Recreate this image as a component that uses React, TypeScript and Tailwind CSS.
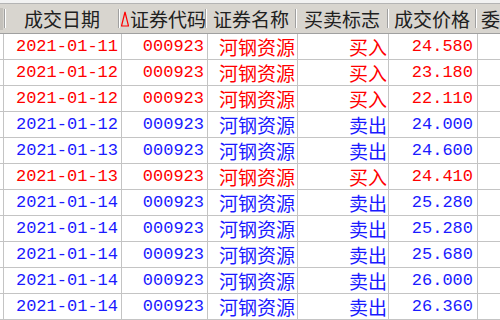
import React from "react";

type Trade = {
  date: string;
  code: string;
  name: string;
  side: "买入" | "卖出";
  price: string;
};

const trades: Trade[] = [
  { date: "2021-01-11", code: "000923", name: "河钢资源", side: "买入", price: "24.580" },
  { date: "2021-01-12", code: "000923", name: "河钢资源", side: "买入", price: "23.180" },
  { date: "2021-01-12", code: "000923", name: "河钢资源", side: "买入", price: "22.110" },
  { date: "2021-01-12", code: "000923", name: "河钢资源", side: "卖出", price: "24.000" },
  { date: "2021-01-13", code: "000923", name: "河钢资源", side: "卖出", price: "24.600" },
  { date: "2021-01-13", code: "000923", name: "河钢资源", side: "买入", price: "24.410" },
  { date: "2021-01-14", code: "000923", name: "河钢资源", side: "卖出", price: "25.280" },
  { date: "2021-01-14", code: "000923", name: "河钢资源", side: "卖出", price: "25.280" },
  { date: "2021-01-14", code: "000923", name: "河钢资源", side: "卖出", price: "25.680" },
  { date: "2021-01-14", code: "000923", name: "河钢资源", side: "卖出", price: "26.000" },
  { date: "2021-01-14", code: "000923", name: "河钢资源", side: "卖出", price: "26.360" },
];

const cjk = "font-['Noto_Sans_CJK_SC',sans-serif] text-[19px]";
const mono = "font-['Liberation_Mono',monospace] text-[17px]";

const Sep = () => (
  <span className="h-[19px] w-[2px] shrink-0 border-l border-[#a0a0a0] border-r border-r-white" />
);

const HeadCell = ({
  w,
  start,
  children,
}: {
  w: string;
  start?: boolean;
  children?: React.ReactNode;
}) => (
  <div className={`${w} flex h-full shrink-0 items-center`}>
    <div
      className={`flex min-w-0 flex-1 items-center whitespace-nowrap ${
        start ? "justify-start pl-[1px]" : "justify-center"
      }`}
    >
      {children}
    </div>
    <Sep />
  </div>
);

export default function App() {
  return (
    <div className="h-[320px] w-[500px] overflow-hidden bg-white text-[#202020] leading-none">
      <div className="h-[4px] border-b border-[#b4b4b4] bg-[#f2f2f2]" />
      <div className={`flex h-[30px] border-b border-[#a0a0a0] bg-[#d8d5cf] ${cjk}`}>
        <div className="flex h-full w-[6px] shrink-0 items-center">
          <span className="h-[22px] w-[3px] bg-[#c4c1bb]" />
          <span className="flex-1" />
          <Sep />
        </div>
        <HeadCell w="w-[114px]">成交日期</HeadCell>
        <HeadCell w="w-[87px]" start>
          <svg width="8" height="16" viewBox="0 0 8 16" className="mr-[1px] mt-[1px] shrink-0">
            <path d="M4 1 L7.5 15 L0.5 15 Z" fill="none" stroke="#ff0000" strokeWidth="1.2" />
          </svg>
          证券代码
        </HeadCell>
        <HeadCell w="w-[90px]">证券名称</HeadCell>
        <HeadCell w="w-[92px]">买卖标志</HeadCell>
        <HeadCell w="w-[88px]">成交价格</HeadCell>
        <div className="flex h-full flex-1 items-center pl-[4px] whitespace-nowrap">委</div>
      </div>
      {trades.map((t, i) => {
        const color = t.side === "买入" ? "text-[#ff0000]" : "text-[#1a1aff]";
        return (
          <div key={i} className={`flex h-[26px] border-b border-[#c4c4c4] ${color}`}>
            <div className="w-[4px] shrink-0 border-r border-[#c4c4c4]" />
            <div className={`flex w-[118px] shrink-0 items-center justify-end border-r border-[#c4c4c4] pr-[3px] ${mono}`}>
              {t.date}
            </div>
            <div className={`flex w-[86px] shrink-0 items-center justify-end border-r border-[#c4c4c4] pr-[3px] ${mono}`}>
              {t.code}
            </div>
            <div className={`flex w-[90px] shrink-0 items-center justify-end border-r border-[#c4c4c4] pr-[2px] ${cjk}`}>
              {t.name}
            </div>
            <div className={`flex w-[91px] shrink-0 items-center justify-end border-r border-[#c4c4c4] pr-[1px] ${cjk}`}>
              {t.side}
            </div>
            <div className={`flex w-[89px] shrink-0 items-center justify-end border-r border-[#c4c4c4] pr-[4px] ${mono}`}>
              {t.price}
            </div>
            <div className="flex-1" />
          </div>
        );
      })}
    </div>
  );
}
